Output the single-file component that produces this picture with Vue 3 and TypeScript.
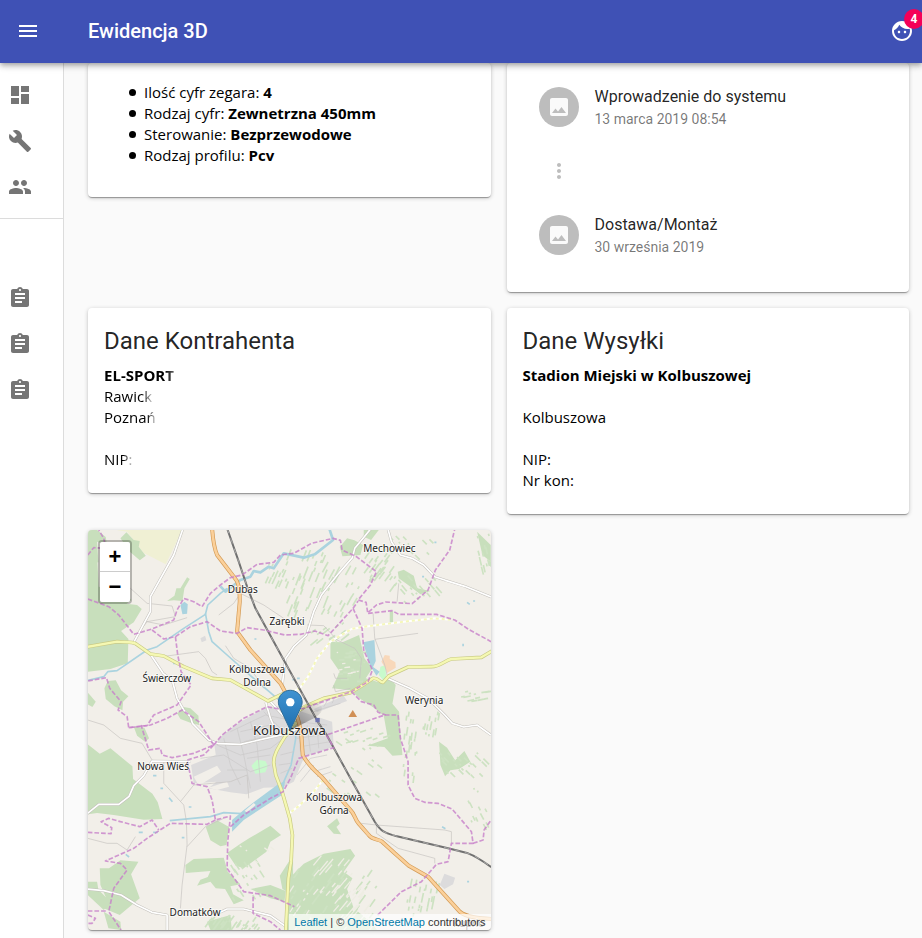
<script setup lang="ts">
interface Spec {
  label: string
  value: string
}

interface Step {
  title: string
  date: string
}

interface Label {
  x: number
  y: number
  lines: string[]
  big?: boolean
}

interface StreakField {
  x: number
  y: number
  w: number
  h: number
  count: number
  dx: number
  dy: number
}

const icons = {
  menu: 'M3 18h18v-2H3v2zm0-5h18v-2H3v2zm0-7v2h18V6H3z',
  face: 'M9 11.75c-.69 0-1.25.56-1.25 1.25s.56 1.25 1.25 1.25 1.25-.56 1.25-1.25-.56-1.25-1.25-1.25zm6 0c-.69 0-1.25.56-1.25 1.25s.56 1.25 1.25 1.25 1.25-.56 1.25-1.25-.56-1.25-1.25-1.25zM12 2C6.48 2 2 6.48 2 12s4.48 10 10 10 10-4.48 10-10S17.52 2 12 2zm0 18c-4.41 0-8-3.59-8-8 0-.29.02-.58.05-.86 2.36-1.05 4.23-2.98 5.21-5.37C11.07 8.33 14.05 10 17.42 10c.78 0 1.53-.09 2.25-.26.21.71.33 1.47.33 2.26 0 4.41-3.59 8-8 8z',
  dashboard: 'M3 13h8V3H3v10zm0 8h8v-6H3v6zm10 0h8V11h-8v10zm0-18v6h8V3h-8z',
  build: 'M22.7 19l-9.1-9.1c.9-2.3.4-5-1.5-6.9-2-2-5-2.4-7.4-1.3L9 6 6 9 1.6 4.7C.4 7.1.9 10.1 2.9 12.1c1.9 1.9 4.6 2.4 6.9 1.5l9.1 9.1c.4.4 1 .4 1.4 0l2.3-2.3c.5-.4.5-1.1.1-1.4z',
  group: 'M16 11c1.66 0 2.99-1.34 2.99-3S17.66 5 16 5c-1.66 0-3 1.34-3 3s1.34 3 3 3zm-8 0c1.66 0 2.99-1.34 2.99-3S9.66 5 8 5C6.34 5 5 6.34 5 8s1.34 3 3 3zm0 2c-2.33 0-7 1.17-7 3.5V19h14v-2.5c0-2.33-4.67-3.5-7-3.5zm8 0c-.29 0-.62.02-.97.05 1.16.84 1.97 1.97 1.97 3.45V19h6v-2.5c0-2.33-4.67-3.5-7-3.5z',
  assignment: 'M19 3h-4.18C14.4 1.84 13.3 1 12 1c-1.3 0-2.4.84-2.82 2H5c-1.1 0-2 .9-2 2v14c0 1.1.9 2 2 2h14c1.1 0 2-.9 2-2V5c0-1.1-.9-2-2-2zm-7 0c.55 0 1 .45 1 1s-.45 1-1 1-1-.45-1-1 .45-1 1-1zm2 14H7v-2h7v2zm3-4H7v-2h10v2zm0-4H7V7h10v2z',
  image: 'M21 19V5c0-1.1-.9-2-2-2H5c-1.1 0-2 .9-2 2v14c0 1.1.9 2 2 2h14c1.1 0 2-.9 2-2zM8.5 13.5l2.5 3.01L14.5 12l4.5 6H5l3.5-4.5z',
  more: 'M12 8c1.1 0 2-.9 2-2s-.9-2-2-2-2 .9-2 2 .9 2 2 2zm0 2c-1.1 0-2 .9-2 2s.9 2 2 2 2-.9 2-2-.9-2-2-2zm0 6c-1.1 0-2 .9-2 2s.9 2 2 2 2-.9 2-2-.9-2-2-2z',
}

const mainNav = [icons.dashboard, icons.build, icons.group]
const orderNav = [icons.assignment, icons.assignment, icons.assignment]

const specs: Spec[] = [
  { label: 'Ilość cyfr zegara:', value: '4' },
  { label: 'Rodzaj cyfr:', value: 'Zewnetrzna 450mm' },
  { label: 'Sterowanie:', value: 'Bezprzewodowe' },
  { label: 'Rodzaj profilu:', value: 'Pcv' },
]

const steps: Step[] = [
  { title: 'Wprowadzenie do systemu', date: '13 marca 2019 08:54' },
  { title: 'Dostawa/Montaż', date: '30 września 2019' },
]

/* Map geometry, three units to a screen pixel */
const forests = [
  'M12 110L40 90 45 185 115 195 143 225 128 236 160 240 174 252 150 292 112 318 134 342 132 415 80 432 12 440z',
  'M12 15L40 15 66 36 70 62 40 50 44 112 12 118z',
  'M110 40L128 22 150 45 168 48 165 65 186 92 168 106 140 82z',
  'M250 228L272 212 278 190 290 190 310 157 318 162 302 190 296 228 270 226z',
  'M62 490L72 468 96 466 112 496 134 514 118 530 116 556 92 544 66 522z',
  'M280 565L300 546 320 550 344 572 346 600 322 594 290 582z',
  'M150 605L182 608 196 640 184 650 160 632z',
  'M12 502L36 530 26 546 12 538z',
  'M840 15L885 15 862 45 840 35z',
  'M768 66L790 40 812 46 838 60 830 90 800 92 776 94z',
  'M740 350L776 352 826 330 842 400 866 430 846 460 892 474 918 458 936 480 926 536 946 560 948 600 956 690 926 692 902 666 850 662 912 640 900 572 870 548 830 522 800 496 745 490 768 440 740 400z',
  'M942 140L960 134 990 152 1000 190 1040 198 1010 208 970 178 945 160z',
  'M918 258L928 258 928 294 918 294z',
  'M1180 20L1221 60 1221 110 1196 90z',
  'M12 658L48 686 80 670 146 724 148 762 206 806 222 832 236 882 180 884 90 870 40 864 12 868z',
  'M48 1030L76 1030 110 1006 164 1010 142 1048 168 1120 108 1170 60 1150 66 1116 50 1080z',
  'M12 1070L40 1070 44 1094 80 1130 60 1155 12 1110z',
  'M60 1160L110 1190 112 1215 74 1210z',
  'M430 984L470 956 496 940 560 902 592 930 560 950 548 980 480 1030 456 1022z',
  'M366 906L400 886 436 906 428 960 410 964 380 946z',
  'M305 1020L330 1002 420 998 432 1040 470 1078 440 1084 448 1108 480 1126 450 1138 424 1092 396 1090 380 1070 340 1082 350 1064 372 1056 380 1038 306 1044z',
  'M500 1092L560 1080 606 1098 602 1130 560 1120z',
  'M588 1052L628 990 628 1110 596 1092z',
  'M606 1070L660 1016 720 986 800 972 814 992 780 1040 806 1060 790 1092 810 1150 860 1190 880 1215 606 1215z',
  'M1066 650L1090 668 1114 706 1142 678 1160 710 1126 732 1100 736 1084 754 1070 720z',
  'M730 904L760 880 768 896 758 906 772 928 750 926z',
  'M410 735L440 730 448 764 424 766z',
  'M370 1190L440 1170 444 1215 380 1215z',
]

const streakFields: StreakField[] = [
  { x: 610, y: 70, w: 130, h: 190, count: 38, dx: -12, dy: 30 },
  { x: 720, y: 100, w: 110, h: 170, count: 22, dx: -14, dy: 26 },
  { x: 850, y: 80, w: 90, h: 100, count: 26, dx: -16, dy: 22 },
  { x: 550, y: 110, w: 60, h: 60, count: 14, dx: -10, dy: 22 },
  { x: 900, y: 30, w: 150, h: 60, count: 12, dx: 12, dy: 12 },
  { x: 940, y: 150, w: 120, h: 80, count: 18, dx: 14, dy: 16 },
  { x: 690, y: 290, w: 110, h: 60, count: 14, dx: -20, dy: 16 },
  { x: 760, y: 380, w: 80, h: 90, count: 18, dx: 20, dy: 0 },
  { x: 960, y: 560, w: 40, h: 200, count: 20, dx: -3, dy: 22 },
  { x: 1020, y: 540, w: 50, h: 90, count: 12, dx: -4, dy: 22 },
  { x: 1130, y: 500, w: 80, h: 30, count: 12, dx: 22, dy: -4 },
  { x: 1060, y: 680, w: 140, h: 70, count: 24, dx: 14, dy: 14 },
  { x: 770, y: 610, w: 130, h: 60, count: 14, dx: 18, dy: -6 },
  { x: 700, y: 640, w: 190, h: 190, count: 24, dx: 16, dy: 12 },
  { x: 620, y: 1010, w: 260, h: 160, count: 50, dx: -16, dy: 22 },
  { x: 970, y: 1060, w: 100, h: 110, count: 24, dx: -5, dy: 24 },
  { x: 1150, y: 780, w: 60, h: 120, count: 12, dx: 8, dy: 16 },
  { x: 440, y: 1000, w: 90, h: 130, count: 18, dx: 12, dy: 18 },
  { x: 380, y: 1170, w: 150, h: 40, count: 30, dx: -14, dy: 20 },
  { x: 1180, y: 25, w: 40, h: 110, count: 12, dx: 5, dy: 22 },
]

const clearingFields: StreakField[] = [
  { x: 625, y: 1080, w: 60, h: 130, count: 14, dx: -12, dy: 18 },
  { x: 700, y: 985, w: 110, h: 120, count: 22, dx: -20, dy: 24 },
  { x: 760, y: 1080, w: 110, h: 130, count: 34, dx: -20, dy: 24 },
  { x: 750, y: 380, w: 70, h: 70, count: 8, dx: 14, dy: -2 },
  { x: 450, y: 950, w: 120, h: 70, count: 5, dx: 12, dy: 10 },
]

function streakPath(field: StreakField, index: number): string {
  let path = ''
  for (let i = 0; i < field.count; i++) {
    const u = ((i + 1) * 0.618 + index * 0.17) % 1
    const v = ((i + 1) * (i + 3) * 0.3719 + index * 0.31) % 1
    const k = 0.3 + ((i * 7) % 10) / 10
    const x = Math.round(field.x + u * field.w)
    const y = Math.round(field.y + v * field.h)
    path += `M${x} ${y}l${Math.round(field.dx * k)} ${Math.round(field.dy * k)}`
  }
  return path
}

const streaks = streakFields.map(streakPath).join('')
const clearings = clearingFields.map(streakPath).join('')

const orangeRoad =
  'M385 10C388 50 392 72 400 90L450 155C466 172 468 190 468 230L460 320 500 375 590 475 612 515 642 580 652 620 657 690C670 715 690 735 713 755L800 855C815 870 812 882 825 896L855 930C866 945 885 942 895 950L933 985 975 1022 1033 1055 1060 1085 1128 1160C1150 1178 1190 1180 1225 1182'

const yellowRoads = [
  'M8 366L100 350C130 352 145 350 156 356L200 387 240 393 300 425 385 460 440 465 553 528 600 505 650 520',
  'M640 560L663 545 720 520 800 503 838 480 868 460C885 458 890 475 898 472L915 453 973 426 1043 425C1070 425 1085 405 1103 402L1193 397 1225 378',
  'M640 590L603 636C585 665 568 690 570 715L576 750 595 800 618 880 626 930 622 1010 614 1060 606 1218',
]

const whiteRoads = [
  'M298 10L270 90 200 215 200 260 150 352',
  'M200 388L238 445 265 465 280 520 300 555 320 575 326 595 375 645 405 656 470 658 600 628 640 612',
  'M8 868L45 838 105 838 136 814 150 782 180 752 205 708 320 710',
  'M8 1092L60 1097 112 1110 160 1140 205 1162 250 1170 250 1218',
  'M400 1166L430 1152 480 1152 560 1172 608 1206',
  'M862 10L838 40 813 70 806 98 765 145 713 210 690 260 668 330 630 365 606 400 600 440 596 480 605 505',
  'M912 10L923 50 950 90 985 100 1020 120 1053 155 1085 166 1143 184 1222 216',
  'M910 460L978 490 1035 522 1083 570 1106 595 1140 606 1180 600 1222 630',
  'M546 532L560 580 574 612',
  'M560 530L610 585',
]

const dashedRoads = [
  'M625 500L648 490 673 455 700 400 740 350 803 312 843 305 960 290 1053 280 1100 284',
  'M718 765L690 800 643 845 612 868',
]

const lanes = [
  'M140 190L190 235 265 243 275 275 190 290 160 330',
  'M180 288L240 300 310 278',
  'M235 395L345 380 365 400 385 440 400 450',
  'M405 270L450 235 470 205 540 240 600 280',
  'M425 362L450 400 500 430 540 490',
  'M240 710L240 775 300 840 308 890 310 960 295 1080 290 1150',
  'M310 965L365 905 420 880',
  'M290 830L330 780 440 770 490 750 495 820',
  'M868 265L873 340 903 420 910 450',
  'M873 343L1003 325',
  'M670 300L720 302 760 345 813 370 833 400 828 460',
  'M833 895L878 900 1083 915 1103 920 1103 955',
  'M878 900L878 925 943 970 1053 1000 1053 1015',
  'M12 940L70 955 100 955 130 975 155 935',
  'M12 585L60 600 110 640 175 655 205 705',
  'M750 480L755 500 800 490',
  'M940 230L945 175',
  'M790 460L755 460 750 445',
]

const streets = [
  'M440 620L545 570 640 590 730 600',
  'M400 660L470 690 560 670 600 640',
  'M350 700L420 690 500 740 560 720',
  'M460 610L480 690 500 790',
  'M500 590L520 660 530 770',
  'M420 640L440 720 470 780',
  'M540 560L600 620',
  'M470 620L560 600M480 650L565 630M490 700L560 690M430 735L490 735',
  'M645 610L650 680M670 600L680 680M700 600L705 670M640 640L745 625M650 665L740 650',
  'M590 690L630 680M585 720L620 715M590 745L625 730',
  'M700 540L720 525 760 510M720 545L735 520M745 535L755 512M690 560L720 550 770 535',
  'M640 750L680 700 730 690M650 770L690 720M690 740L740 725M700 755L745 740',
]

const boundaries = [
  'M12 222L75 245 105 270 150 328 205 312 270 285 280 255 300 220 330 230 355 245 380 205 410 180 440 158 475 150 520 118 570 112 590 90 630 85 683 55 748 40 770 46 775 75 818 95 878 140 860 180 823 225 847 232 852 264 878 240 905 231 985 236 1033 195 1055 135 1098 75 1113 12',
  'M205 315L240 342 275 335 320 305 370 290 410 318 460 325 490 308 540 315 603 330 650 328 693 318 733 332 808 250 823 228',
  'M808 250L835 310 840 375 866 435 853 470 803 500 660 550 600 555 550 545 480 580 415 630 390 660',
  'M853 265L925 257 945 268 1058 268 1113 285 1153 312 1222 350',
  'M275 335L282 390 292 440 322 480 280 540 210 570 190 602 135 608 130 575 103 555 112 530 78 490 68 458 12 468',
  'M135 608L200 600 250 580 295 555 345 590 390 660 330 685 265 698 235 690 230 670 195 675 172 600',
  'M390 660L360 690 310 705 325 775 370 785 385 825 395 885 440 873 432 950 430 1030 480 1100 560 1112 632 1145',
  'M395 885L370 898 260 895 190 940 150 970 65 1008 110 1015 130 1035 90 1090 75 1160 112 1215',
  'M12 922L82 926 84 908 52 890 75 880 110 890 168 905 205 885 225 915',
  'M12 1158L70 1158M12 1170L35 1180 25 1195 12 1195',
  'M508 1115L508 1165 560 1190 590 1215',
  'M440 905L480 870 560 820 598 800 620 760 645 700 750 668 728 630 903 570 943 570 950 640 973 710 973 780 993 820 1023 832 1063 835 1105 852 1163 920 1168 955 1103 955 1093 1010 1058 1018 1013 1070 953 1100 880 1172',
  'M803 500L833 530 870 540 883 562 906 570',
  'M1168 955L1198 945 1201 915 1222 885',
  'M12 90L30 68 66 70 60 40 45 15',
]

const railway =
  'M430 10L465 110 490 185 515 250 600 405 703 592 730 632 800 760 873 890C895 925 910 925 933 932L1093 970 1153 985C1180 995 1200 1010 1225 1028'

const labels: Label[] = [
  { x: 917, y: 82, lines: ['Mechowiec'] },
  { x: 477, y: 205, lines: ['Dubas'] },
  { x: 610, y: 299, lines: ['Zarębki'] },
  { x: 520, y: 444, lines: ['Kolbuszowa', 'Dolna'] },
  { x: 249, y: 472, lines: ['Świerczów'] },
  { x: 1021, y: 537, lines: ['Werynia'] },
  { x: 617, y: 629, lines: ['Kolbuszowa'], big: true },
  { x: 238, y: 736, lines: ['Nowa Wieś'] },
  { x: 751, y: 828, lines: ['Kolbuszowa', 'Górna'] },
  { x: 334, y: 1174, lines: ['Domatków'] },
  { x: 1155, y: 1206, lines: ['Kuprio'] },
]
</script>

<template>
  <div class="app">
    <header class="toolbar">
      <button class="icon-button" type="button" aria-label="Menu">
        <svg viewBox="0 0 24 24"><path :d="icons.menu" /></svg>
      </button>
      <h1 class="brand">Ewidencja 3D</h1>
      <button class="icon-button account" type="button" aria-label="Konto">
        <svg viewBox="0 0 24 24"><path :d="icons.face" /></svg>
        <span class="badge">4</span>
      </button>
    </header>

    <div class="body">
      <nav class="sidebar">
        <div class="nav-group">
          <a v-for="(icon, i) in mainNav" :key="i" href="#" class="nav-item">
            <svg viewBox="0 0 24 24"><path :d="icon" /></svg>
          </a>
        </div>
        <div class="nav-group orders">
          <a v-for="(icon, i) in orderNav" :key="i" href="#" class="nav-item">
            <svg viewBox="0 0 24 24"><path :d="icon" /></svg>
          </a>
        </div>
      </nav>

      <main class="grid">
        <section class="card specs-card">
          <ul class="specs">
            <li v-for="spec in specs" :key="spec.label">
              {{ spec.label }} <b>{{ spec.value }}</b>
            </li>
          </ul>
        </section>

        <section class="card steps-card">
          <template v-for="(step, i) in steps" :key="step.title">
            <div v-if="i > 0" class="step">
              <span class="more">
                <svg viewBox="0 0 24 24"><path :d="icons.more" /></svg>
              </span>
            </div>
            <div class="step">
              <span class="avatar">
                <svg viewBox="0 0 24 24"><path :d="icons.image" /></svg>
              </span>
              <div>
                <div class="step-title">{{ step.title }}</div>
                <div class="step-date">{{ step.date }}</div>
              </div>
            </div>
          </template>
        </section>

        <section class="card details">
          <h2>Dane Kontrahenta</h2>
          <p><b class="fade-end light">EL-SPORT</b></p>
          <p><span class="fade-end">Rawick</span></p>
          <p><span class="fade-end">Poznań</span></p>
          <p class="spaced"><span class="fade-end">NIP:</span></p>
        </section>

        <section class="card details">
          <h2>Dane Wysyłki</h2>
          <p><b>Stadion Miejski w Kolbuszowej</b></p>
          <p class="spaced">Kolbuszowa</p>
          <p class="spaced">NIP:</p>
          <p>Nr kon:</p>
        </section>

        <section class="card map">
          <svg class="map-canvas" viewBox="12 15 1209 1200" preserveAspectRatio="xMidYMid slice">
            <defs>
              <linearGradient id="pin" x1="0" y1="0" x2="0" y2="1">
                <stop offset="0" stop-color="#3f93d2" />
                <stop offset="1" stop-color="#1f6fae" />
              </linearGradient>
              <linearGradient id="pin-shadow" x1="0" y1="1" x2="1" y2="0">
                <stop offset="0" stop-color="#000" stop-opacity=".45" />
                <stop offset="1" stop-color="#000" stop-opacity="0" />
              </linearGradient>
            </defs>
            <path class="farmland" d="M66 10L298 10 246 118 180 84 130 20z" />
            <path v-for="(d, i) in forests" :key="'f' + i" class="forest" :d="d" />
            <path class="streaks" :d="streaks" />
            <path class="clearings" :d="clearings" />
            <path class="town" d="M415 632L455 600 545 548 600 542 745 590 750 665 662 695 630 770 598 786 540 788 488 808 440 802 374 790 398 770 330 775 322 720 396 690 392 660z" />
            <path class="town" d="M690 552L780 512 790 528 700 562zM1068 1080L1082 1046 1114 1058 1108 1078 1082 1092zM350 340L364 332 368 346 354 352z" />
            <path class="land" d="M330 755L400 722 412 740 345 782zM374 788L430 770 436 785 400 795z" />
            <path class="park" d="M503 722L520 704 545 708 552 722 545 742 515 746zM885 450L890 425 905 420 907 455 898 465z" />
            <path class="sand" d="M893 410L903 390 918 392 918 402 935 412 936 428 910 444 905 430z" />
            <path class="river" d="M8 467L60 455 72 440 100 437 190 375 220 365 300 310 365 268 372 240 410 205 430 190" />
            <path class="river" d="M365 265L375 320 385 350 430 390 500 452 580 520 630 570 636 640 622 720 598 775" />
            <path class="river wide" d="M410 184L425 200 470 165 500 155 510 138 530 142 555 125 570 130 600 85 660 98 693 88 748 45 737 12" />
            <path class="river" d="M258 887L380 875 420 863 475 866" />
            <path class="water" d="M445 885L480 855 520 824 580 780 604 768 598 808 545 842 480 885 445 920z" />
            <path class="land" d="M482 858L510 834 516 840 490 862z" />
            <path class="water" d="M838 352L872 345 876 408 868 426 888 440 878 452 858 420z" />
            <path class="water" d="M290 240L302 230 312 238 310 266 296 268z" />
            <path class="ponds" d="M208 752h10M230 790h8M256 818l10 12M165 922h12M208 922h14M294 938h8M126 988l10 8M315 846h8M1052 52h6M1015 155h6M1168 228h6M1150 232l8 6M626 464h8M640 460h8M1138 356v8M1150 1070h6M1075 905l10 6M512 342h6M268 415h8" />
            <path v-for="(d, i) in lanes" :key="'l' + i" class="lane" :d="d" />
            <path v-for="(d, i) in streets" :key="'s' + i" class="street" :d="d" />
            <g v-for="(d, i) in whiteRoads" :key="'w' + i">
              <path class="white-casing" :d="d" />
              <path class="white-road" :d="d" />
            </g>
            <g v-for="(d, i) in dashedRoads" :key="'d' + i">
              <path class="dashed-base" :d="d" />
              <path class="dashed-road" :d="d" />
            </g>
            <path v-for="(d, i) in yellowRoads" :key="'yc' + i" class="yellow-casing" :d="d" />
            <path v-for="(d, i) in yellowRoads" :key="'y' + i" class="yellow-road" :d="d" />
            <path class="orange-casing" :d="orangeRoad" />
            <path class="orange-road" :d="orangeRoad" />
            <path class="rail" :d="railway" />
            <path class="rail-gap" :d="railway" />
            <path v-for="(d, i) in boundaries" :key="'b' + i" class="boundary" :d="d" />
            <path class="station" d="M695 579h13v13h-13z" />
            <path class="peak" d="M807 555l13 21h-26z" />
            <text
              v-for="label in labels"
              :key="label.x"
              :x="label.x"
              :y="label.y"
              class="place"
              :class="{ big: label.big }"
            >
              <tspan v-for="(line, i) in label.lines" :key="line" :x="label.x" :dy="i ? 38 : 0">{{ line }}</tspan>
            </text>
            <path fill="url(#pin-shadow)" d="M620 616L655 548Q690 520 712 540 724 560 690 580z" />
            <g transform="translate(582 494) scale(3)">
              <path
                fill="url(#pin)"
                stroke="#2e6c97"
                stroke-width="1"
                d="M12.5.6C5.8.6.6 6 .6 12.4c0 2.600.8 4.500 2.200 7.300L12.500 40.300 22.200 19.700c1.400-2.800 2.200-4.700 2.200-7.300C24.400 6 19.200.6 12.500.6z"
              />
              <circle cx="12.500" cy="12.500" r="4.200" fill="#fff" />
            </g>
          </svg>

          <div class="zoom">
            <button type="button" aria-label="Zoom in">+</button>
            <button type="button" aria-label="Zoom out">−</button>
          </div>
          <div class="attribution">
            <a href="#">Leaflet</a> | © <a href="#">OpenStreetMap</a> contributors
          </div>
        </section>
      </main>
    </div>
  </div>
</template>

<style>
body {
  background: #fafafa;
}
</style>

<style scoped>
.app {
  display: flex;
  flex-direction: column;
  min-height: 100vh;
  overflow: hidden;
  color: #000;
  font-family: "Open Sans", "Noto Sans", sans-serif;
  font-size: 15px;
  line-height: 21px;
}

svg {
  display: block;
}

.toolbar {
  position: relative;
  z-index: 2;
  box-sizing: border-box;
  display: flex;
  align-items: center;
  height: 63px;
  padding: 0 8px 2px 16px;
  background: #3f51b5;
  color: #fff;
  box-shadow: 0 2px 4px -1px rgba(0, 0, 0, 0.2), 0 4px 5px rgba(0, 0, 0, 0.14), 0 1px 10px rgba(0, 0, 0, 0.12);
}

.icon-button {
  padding: 0;
  border: 0;
  background: none;
  color: inherit;
  cursor: pointer;
}

.icon-button svg {
  width: 24px;
  height: 24px;
  fill: currentColor;
}

.brand {
  flex: 1;
  margin: 0 0 0 48px;
  font: 500 20px/32px Roboto, sans-serif;
}

.account {
  position: relative;
}

.badge {
  position: absolute;
  top: -10px;
  left: 14px;
  width: 20px;
  height: 20px;
  border-radius: 50%;
  background: #f50057;
  font: 700 12px/20px Roboto, sans-serif;
  text-align: center;
}

.body {
  display: flex;
  flex: 1;
}

.sidebar {
  box-sizing: border-box;
  flex: none;
  width: 64px;
  padding-top: 9px;
  border-right: 1px solid #dcdcdc;
  background: #fff;
}

.nav-group {
  display: flex;
  flex-direction: column;
}

.nav-group.orders {
  margin-top: 8px;
  padding-top: 56px;
  border-top: 1px solid #dcdcdc;
}

.nav-item {
  display: flex;
  align-items: center;
  height: 46px;
  padding-left: 8px;
}

.nav-item svg {
  width: 24px;
  height: 24px;
  fill: #757575;
}

.grid {
  display: grid;
  flex: 1;
  grid-template-columns: repeat(2, minmax(0, 1fr));
  gap: 16px;
  align-content: start;
  align-items: start;
  padding: 0 13px 8px 24px;
}

.card {
  border-radius: 4px;
  background: #fff;
  box-shadow: 0 2px 1px -1px rgba(0, 0, 0, 0.2), 0 1px 1px rgba(0, 0, 0, 0.14), 0 1px 4px rgba(0, 0, 0, 0.22);
}

.specs-card {
  padding: 19px 16px 31px;
}

.specs {
  margin: 0;
  padding-left: 40px;
  list-style: none;
}

.specs li::before {
  content: "";
  display: inline-block;
  width: 7px;
  height: 7px;
  margin: 0 8px 0 -15px;
  border-radius: 50%;
  background: #000;
  vertical-align: 2px;
}

.steps-card {
  padding: 12px 32px 25px;
}

.step {
  display: flex;
  align-items: center;
  gap: 16px;
  height: 64px;
  font-family: Roboto, sans-serif;
}

.avatar,
.more {
  display: flex;
  align-items: center;
  justify-content: center;
  width: 40px;
  height: 40px;
}

.avatar {
  border-radius: 50%;
  background: #bdbdbd;
}

.avatar svg {
  width: 24px;
  height: 24px;
  fill: #fafafa;
}

.more svg {
  width: 24px;
  height: 24px;
  fill: #bdbdbd;
}

.step-title {
  color: rgba(0, 0, 0, 0.87);
  font-size: 16px;
  line-height: 24px;
}

.step-date {
  color: rgba(0, 0, 0, 0.54);
  font-size: 14px;
  line-height: 20px;
}

.details {
  padding: 16px 16px 23px;
}

.details h2 {
  margin: 0 0 6px;
  color: rgba(0, 0, 0, 0.87);
  font: 400 24px/35px Roboto, sans-serif;
}

.details p {
  margin: 0;
}

.details .spaced {
  margin-top: 21px;
}

.fade-end {
  display: inline-block;
  -webkit-mask-image: linear-gradient(to left, rgba(0, 0, 0, 0.2), #000 9px);
  mask-image: linear-gradient(to left, rgba(0, 0, 0, 0.2), #000 9px);
}

.fade-end.light {
  -webkit-mask-image: linear-gradient(to left, rgba(0, 0, 0, 0.6), #000 9px);
  mask-image: linear-gradient(to left, rgba(0, 0, 0, 0.6), #000 9px);
}

.map {
  position: relative;
  height: 400px;
  overflow: hidden;
  background: #f2efe9;
}

.map-canvas {
  width: 100%;
  height: 100%;
}

.map-canvas path {
  stroke-linejoin: round;
}

.farmland { fill: #f0f0d4; }
.forest { fill: #c8dfbc; }
.town { fill: #dcdbdc; }
.land { fill: #f2efe9; }
.park { fill: #c8facc; }
.sand { fill: #f8d8ba; }
.water { fill: #aad3df; }
.station { fill: #6c72ae; }
.peak { fill: #d08f55; }

.streaks,
.clearings,
.river,
.ponds,
.lane,
.street,
.white-casing,
.white-road,
.dashed-base,
.dashed-road,
.yellow-casing,
.yellow-road,
.orange-casing,
.orange-road,
.rail,
.rail-gap,
.boundary {
  fill: none;
}

.streaks { stroke: #cde2c2; stroke-width: 5; }
.clearings { stroke: #eeede3; stroke-width: 4; }
.river { stroke: #aad3df; stroke-width: 5; }
.river.wide { stroke-width: 8; }
.ponds { stroke: #aad3df; stroke-width: 5; }
.lane { stroke: #c6c3bf; stroke-width: 2; }
.street { stroke: #cac8c8; stroke-width: 2; }
.white-casing { stroke: #c3c0bb; stroke-width: 8; }
.white-road { stroke: #fff; stroke-width: 5; }
.dashed-base { stroke: #fff; stroke-width: 6; }
.dashed-road { stroke: #f5f7bb; stroke-width: 6; stroke-dasharray: 9 9; }
.yellow-casing { stroke: #c9ca86; stroke-width: 11; }
.yellow-road { stroke: #f5f8b2; stroke-width: 7; }
.orange-casing { stroke: #d39a55; stroke-width: 12; }
.orange-road { stroke: #fbd09a; stroke-width: 8; }
.rail { stroke: #707070; stroke-width: 6; }
.rail-gap { stroke: #c5c4c2; stroke-width: 2; stroke-dasharray: 16 16; }
.boundary { stroke: #c77fc9; stroke-width: 5; stroke-dasharray: 14 6; opacity: 0.8; }

.place {
  fill: #222;
  stroke: rgba(255, 255, 255, 0.7);
  stroke-width: 5px;
  paint-order: stroke;
  font-family: "Noto Sans", sans-serif;
  font-size: 30px;
  text-anchor: middle;
}

.place.big {
  font-size: 39px;
}

.zoom {
  position: absolute;
  top: 10px;
  left: 10px;
  display: flex;
  flex-direction: column;
  overflow: hidden;
  border: 2px solid rgba(0, 0, 0, 0.25);
  border-radius: 4px;
  background: #ccc;
  background-clip: padding-box;
}

.zoom button {
  width: 30px;
  height: 30px;
  padding: 0;
  border: 0;
  background: #fff;
  color: #000;
  font: 700 22px/30px "Liberation Sans", sans-serif;
  cursor: pointer;
}

.zoom button:first-child {
  border-bottom: 1px solid #ccc;
}

.attribution {
  position: absolute;
  right: 0;
  bottom: 0;
  padding: 0 5px;
  background: rgba(255, 255, 255, 0.7);
  color: #333;
  font: 11px/16px "Liberation Sans", sans-serif;
}

.attribution a {
  color: #0078a8;
  text-decoration: none;
}
</style>
